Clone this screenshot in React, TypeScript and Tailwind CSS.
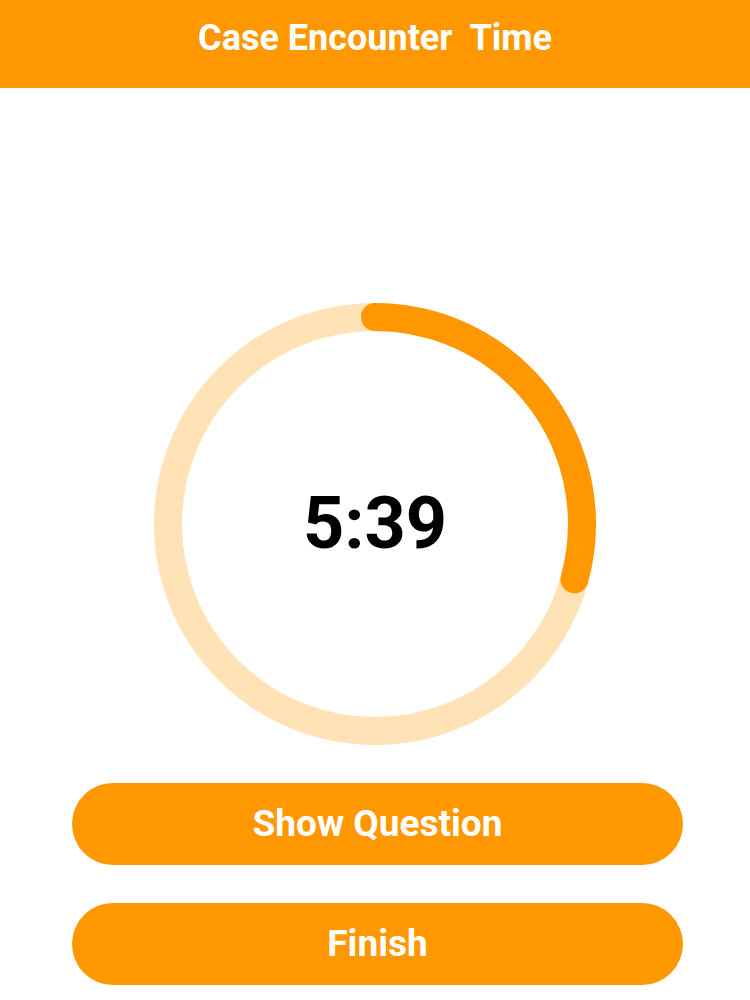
import React from 'react';

const SIZE = 442;
const STROKE = 28;
const R = (SIZE - STROKE) / 2;
const CIRC = 2 * Math.PI * R;

const TimerRing: React.FC<{ progress: number; label: string }> = ({ progress, label }) => {
  const dash = CIRC * progress;
  return (
    <div className="relative w-[442px] h-[442px]">
      <svg width={SIZE} height={SIZE} viewBox={`0 0 ${SIZE} ${SIZE}`} className="-rotate-90">
        <circle cx={SIZE / 2} cy={SIZE / 2} r={R} fill="none" stroke="#FFE2B6" strokeWidth={STROKE} />
        <circle
          cx={SIZE / 2}
          cy={SIZE / 2}
          r={R}
          fill="none"
          stroke="#FF9800"
          strokeWidth={STROKE}
          strokeLinecap="round"
          strokeDasharray={`${dash} ${CIRC}`}
        />
      </svg>
      <div className="absolute inset-0 flex items-center justify-center">
        <span className="text-[72px] font-bold text-black leading-none">{label}</span>
      </div>
    </div>
  );
};

export default function App() {
  return (
    <div className="w-[750px] h-[1000px] bg-white flex flex-col font-['Roboto',sans-serif]">
      <div className="h-[88px] bg-[#FF9800] flex items-center justify-center pb-[12px]">
        <h1 className="text-white text-[36px] font-bold whitespace-pre leading-none">Case Encounter  Time</h1>
      </div>
      <div className="flex justify-center mt-[215px]">
        <TimerRing progress={0.293} label="5:39" />
      </div>
      <div className="flex flex-col gap-[38px] w-[611px] ml-[72px] mt-[38px]">
        <button className="h-[82px] rounded-full bg-[#FF9800] text-white text-[37px] font-bold">
          Show Question
        </button>
        <button className="h-[82px] rounded-full bg-[#FF9800] text-white text-[37px] font-bold">
          Finish
        </button>
      </div>
    </div>
  );
}
